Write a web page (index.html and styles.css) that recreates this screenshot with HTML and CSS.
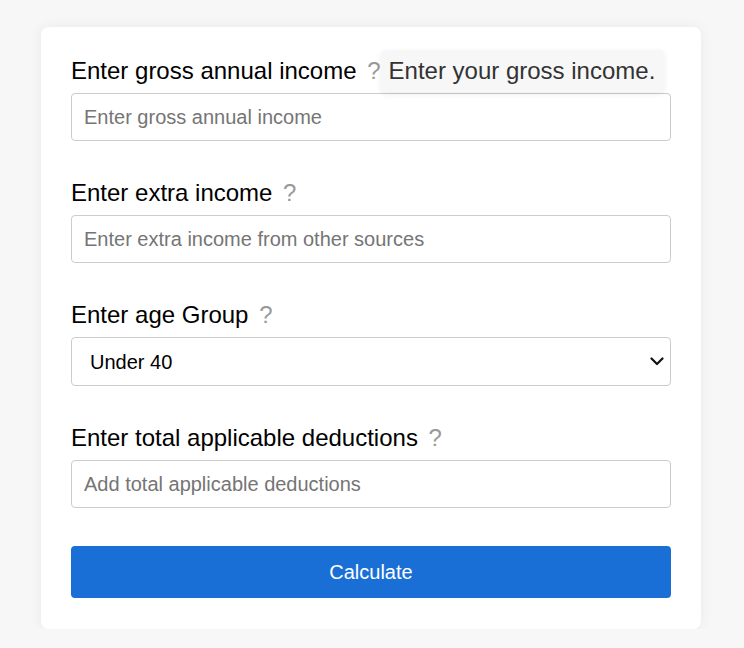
FILE: index.html
```html
<!DOCTYPE html>
<html lang="en">
<head>
<meta charset="utf-8">
<title>Tax Calculator</title>
<link rel="stylesheet" href="styles.css">
</head>
<body>
<main class="page">
  <form class="card">
    <div class="group">
      <label class="label">Enter gross annual income <span class="help">?<span class="tip">Enter your gross income.</span></span></label>
      <input class="field" type="text" placeholder="Enter gross annual income">
    </div>
    <div class="group">
      <label class="label">Enter extra income <span class="help">?</span></label>
      <input class="field" type="text" placeholder="Enter extra income from other sources">
    </div>
    <div class="group">
      <label class="label">Enter age Group <span class="help">?</span></label>
      <div class="select-wrap">
        <select class="field select">
          <option>Under 40</option>
          <option>40 to 60</option>
          <option>60 and above</option>
        </select>
        <svg class="chevron" width="14" height="9" viewBox="0 0 14 9" aria-hidden="true">
          <path d="M1.5 1.5 L7 7 L12.5 1.5" fill="none" stroke="#111" stroke-width="2.2" stroke-linecap="round" stroke-linejoin="round"/>
        </svg>
      </div>
    </div>
    <div class="group">
      <label class="label">Enter total applicable deductions <span class="help">?</span></label>
      <input class="field" type="text" placeholder="Add total applicable deductions">
    </div>
    <button class="btn" type="button">Calculate</button>
  </form>
</main>
</body>
</html>
```
FILE: styles.css
```css
* { box-sizing: border-box; }
html, body { margin: 0; padding: 0; }
body {
  background: #f7f7f7;
  font-family: "Liberation Sans", Arial, sans-serif;
  color: #000;
}
.page {
  display: flex;
  justify-content: center;
  padding: 27px 2px 0 0;
}
.card {
  width: 660px;
  background: #fff;
  border-radius: 8px;
  box-shadow: 0 0 14px rgba(0, 0, 0, 0.06);
  padding: 30px 30px 31px;
  display: flex;
  flex-direction: column;
}
.group {
  display: flex;
  flex-direction: column;
  margin-bottom: 38px;
}
.label {
  font-size: 24px;
  line-height: 28px;
  margin-bottom: 8px;
}
.help {
  position: relative;
  color: #999;
  margin-left: 4px;
}
.tip {
  position: absolute;
  left: 100%;
  top: -7px;
  white-space: nowrap;
  background: #f7f7f7;
  color: #333;
  padding: 7px 9px 7px 8px;
  border-radius: 5px;
  box-shadow: 0 2px 6px rgba(0, 0, 0, 0.08);
}
.field {
  width: 100%;
  height: 48px;
  border: 1px solid #ccc;
  border-radius: 4px;
  padding: 0 12px;
  font-family: "Liberation Sans", Arial, sans-serif;
  font-size: 20px;
  color: #000;
  background: #fff;
}
.field::placeholder { color: #757575; }
.select-wrap {
  position: relative;
}
.select {
  -webkit-appearance: none;
  appearance: none;
  padding-left: 18px;
  height: 49px;
}
.chevron {
  position: absolute;
  right: 7px;
  top: 20px;
  pointer-events: none;
}
.btn {
  height: 52px;
  border: 0;
  border-radius: 4px;
  background: #1a6fd6;
  color: #fff;
  font-family: "Liberation Sans", Arial, sans-serif;
  font-size: 20px;
}
```
